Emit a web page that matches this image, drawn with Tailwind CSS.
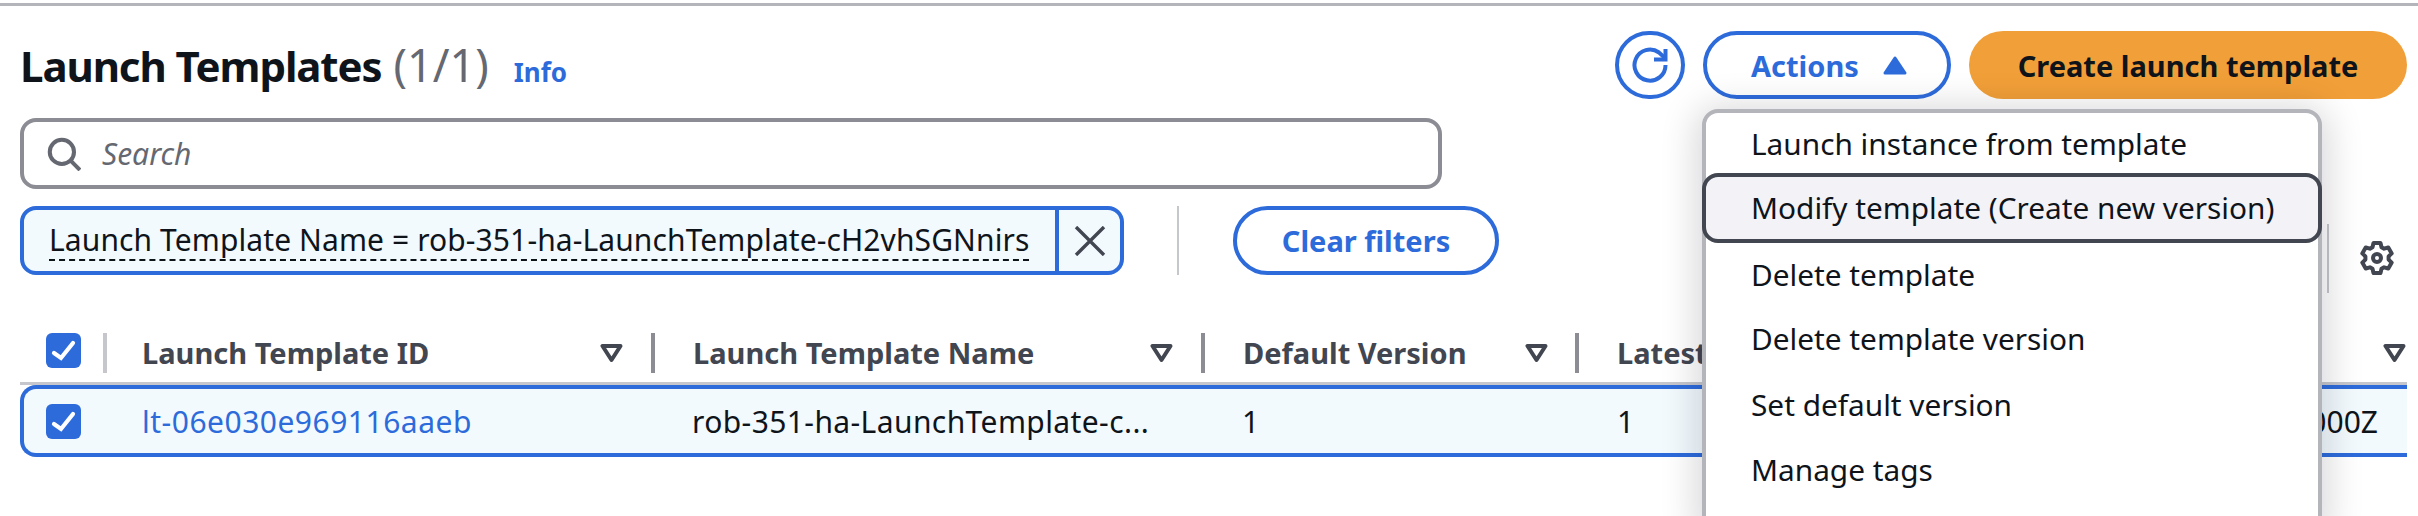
<!DOCTYPE html>
<html lang="en">

<head>
  <meta charset="UTF-8">
  <script src="https://cdn.jsdelivr.net/npm/@tailwindcss/browser@4"></script>
  <title>Launch Templates</title>
</head>

<body class="bg-white font-['Noto_Sans',sans-serif] text-[#0f141a]">
  <div class="relative w-[2418px] h-[516px] overflow-hidden">
    <div class="mt-[3px] h-[3px] bg-[#b4b4bb]"></div>

    <!-- title and buttons -->
    <div class="mt-[25px] h-[68px] pl-[20px] pr-[11px] flex items-center justify-between">
      <div class="flex items-baseline">
        <h1 class="text-[42px] font-bold tracking-[-1.1px]">Launch Templates</h1>
        <span class="ml-[12px] text-[45px] leading-none text-[#656871]">(1/1)</span>
        <a class="ml-[25px] text-[26px] font-bold text-[#2d6bdb]">Info</a>
      </div>
      <div class="flex items-center">
        <button class="w-[70px] h-[68px] rounded-full border-[4px] border-[#2d6bdb] flex items-center justify-center">
          <svg class="w-[36px] h-[36px] text-[#2d6bdb]" viewBox="0 0 36 36" fill="none" stroke="currentColor" stroke-width="4">
            <path d="M33.5 18A15.5 15.5 0 1 1 27 5.5L33 11" />
            <path d="M33.5 2v10.5H22" />
          </svg>
        </button>
        <button class="ml-[18px] w-[248px] h-[68px] rounded-full border-[4px] border-[#2d6bdb] flex items-center pl-[44px] text-[#2d6bdb] text-[29px] font-bold">
          <span class="relative top-[1px]">Actions</span>
          <svg class="ml-[24px] w-[24px] h-[19px]" viewBox="0 0 24 19" fill="currentColor" stroke="currentColor" stroke-width="3" stroke-linejoin="round">
            <path d="M12 2 22 17H2Z" />
          </svg>
        </button>
        <button class="ml-[18px] w-[438px] h-[68px] rounded-full bg-[#f19f38] text-[29px] font-bold"><span class="relative top-[1px]">Create launch template</span></button>
      </div>
    </div>

    <!-- search -->
    <div class="mt-[19px] ml-[20px] w-[1422px] h-[71px] rounded-[16px] border-[4px] border-[#8c8c94] flex items-center pl-[23px]">
      <svg class="w-[34px] h-[34px] text-[#656871]" viewBox="0 0 16 16" fill="none" stroke="currentColor" stroke-width="1.9">
        <circle cx="7" cy="7" r="5.7" />
        <path d="m11 11 4.5 4.5" />
      </svg>
      <span class="ml-[21px] text-[30px] italic text-[#656871]">Search</span>
    </div>

    <!-- filter token -->
    <div class="mt-[17px] ml-[20px] h-[69px] flex items-center">
      <div class="w-[1104px] h-full rounded-[16px] border-[4px] border-[#2d6bdb] bg-[#f2fafe] flex">
        <div class="flex-1 flex items-center pl-[25px]">
          <span class="text-[30px] tracking-[0.1px] leading-[38px] whitespace-nowrap border-b-2 border-dashed border-[#0f141a]">Launch Template Name = rob-351-ha-LaunchTemplate-cH2vhSGNnirs</span>
        </div>
        <div class="w-[65px] border-l-[4px] border-[#2d6bdb] flex items-center justify-center">
          <svg class="w-[32px] h-[30px] text-[#424650]" viewBox="0 0 32 30" fill="none" stroke="currentColor" stroke-width="3.4">
            <path d="M2 1 30 29M30 1 2 29" />
          </svg>
        </div>
      </div>
      <div class="ml-[53px] w-[2px] h-full bg-[#c6c6cd]"></div>
      <button class="ml-[54px] w-[266px] h-full rounded-full border-[4px] border-[#2d6bdb] text-[#2d6bdb] text-[29px] font-bold">Clear filters</button>
    </div>

    <!-- table header -->
    <div class="mt-[58px] mr-[11px] ml-[20px] h-[52px] border-b-[3px] border-[#c6c6cd] flex items-start text-[29px] font-bold text-[#424650]">
      <div class="w-[84px] h-[40px] pl-[26px] flex items-start">
        <span class="w-[35px] h-[35px] rounded-[6px] bg-[#2d6bdb]">
          <svg class="w-[35px] h-[35px] text-white" viewBox="0 0 35 35" fill="none" stroke="currentColor" stroke-width="4.2" stroke-linecap="round">
            <path d="m8 20 7 5 12-15" />
          </svg>
        </span>
        <span class="ml-[22px] w-[4px] h-[40px] shrink-0 bg-[#c6c6cd]"></span>
      </div>
      <div class="w-[551px] h-[40px] pl-[38px] pr-[28px] flex items-center justify-between border-r-[4px] border-[#8c8c94]">
        <span>Launch Template ID</span>
        <svg class="w-[23px] h-[20px]" viewBox="0 0 23 20" fill="none" stroke="currentColor" stroke-width="4" stroke-linejoin="round"><path d="M2.5 3h18L11.5 17Z" /></svg>
      </div>
      <div class="w-[550px] h-[40px] pl-[38px] pr-[28px] flex items-center justify-between border-r-[4px] border-[#8c8c94]">
        <span>Launch Template Name</span>
        <svg class="w-[23px] h-[20px]" viewBox="0 0 23 20" fill="none" stroke="currentColor" stroke-width="4" stroke-linejoin="round"><path d="M2.5 3h18L11.5 17Z" /></svg>
      </div>
      <div class="w-[374px] h-[40px] pl-[38px] pr-[27px] flex items-center justify-between border-r-[4px] border-[#8c8c94]">
        <span>Default Version</span>
        <svg class="w-[23px] h-[20px]" viewBox="0 0 23 20" fill="none" stroke="currentColor" stroke-width="4" stroke-linejoin="round"><path d="M2.5 3h18L11.5 17Z" /></svg>
      </div>
      <div class="flex-1 h-[40px] pl-[38px] pr-[1px] flex items-center justify-between">
        <span>Latest</span>
        <svg class="w-[23px] h-[20px]" viewBox="0 0 23 20" fill="none" stroke="currentColor" stroke-width="4" stroke-linejoin="round"><path d="M2.5 3h18L11.5 17Z" /></svg>
      </div>
    </div>

    <!-- selected row, the last cell runs on behind the menu -->
    <div class="ml-[20px] mr-[11px] h-[72px] rounded-l-[16px] border-y-[4px] border-l-[4px] border-[#2d6bdb] bg-[#f2fafe] flex items-center text-[30px]">
      <div class="w-[80px] pl-[22px]">
        <span class="block w-[35px] h-[35px] rounded-[6px] bg-[#2d6bdb]">
          <svg class="w-[35px] h-[35px] text-white" viewBox="0 0 35 35" fill="none" stroke="currentColor" stroke-width="4.2" stroke-linecap="round">
            <path d="m8 20 7 5 12-15" />
          </svg>
        </span>
      </div>
      <a class="w-[550px] pl-[38px] tracking-[0.5px] text-[#2d6bdb]">lt-06e030e969116aaeb</a>
      <div class="w-[550px] pl-[38px] tracking-[0.4px] whitespace-nowrap">rob-351-ha-LaunchTemplate-c...</div>
      <div class="w-[375px] pl-[38px]">1</div>
      <div class="flex-1 pl-[38px] flex justify-between pr-[29px]"><span>1</span><span>000Z</span></div>
    </div>

    <div class="absolute left-[2327px] top-[224px] w-[2px] h-[69px] bg-[#c6c6cd]"></div>
    <svg class="absolute left-[2359px] top-[240px] w-[36px] h-[36px] text-[#424650]" viewBox="0 0 36 36" fill="none" stroke="currentColor" stroke-width="4" stroke-linejoin="round">
      <path d="M14.5 3h7l1 4.2 2.6 1.5 4.2-1.2 3.4 5.9-3.1 3v3.2l3.1 3-3.4 5.9-4.2-1.2-2.6 1.5-1 4.2h-7l-1-4.2-2.6-1.5-4.2 1.2-3.4-5.9 3.1-3v-3.2l-3.1-3 3.4-5.9 4.2 1.2 2.6-1.5Z" />
      <circle cx="18" cy="18" r="4" />
    </svg>

    <!-- actions menu -->
    <div class="absolute left-[1702px] top-[109px] w-[620px] h-[420px] rounded-t-[16px] border-[4px] border-[#b4b4bb] bg-white shadow-[0_4px_36px_6px_rgba(0,7,22,0.16)] text-[29.8px]">
      <div class="h-[60px] pl-[45px] pt-[3px] flex items-center">Launch instance from template</div>
      <div class="-mx-[4px] h-[70px] pl-[49px] pt-[1px] flex items-center rounded-[16px] border-[4px] border-[#424650] bg-[#f3f3f7]"><span class="-ml-[4px]">Modify template (Create new version)</span></div>
      <div class="h-[62px] pl-[45px] pt-[3px] flex items-center">Delete template</div>
      <div class="h-[66px] pl-[45px] pt-[3px] flex items-center">Delete template version</div>
      <div class="h-[65px] pl-[45px] pt-[3px] flex items-center">Set default version</div>
      <div class="h-[65px] pl-[45px] pt-[3px] flex items-center">Manage tags</div>
    </div>
  </div>
</body>

</html>
